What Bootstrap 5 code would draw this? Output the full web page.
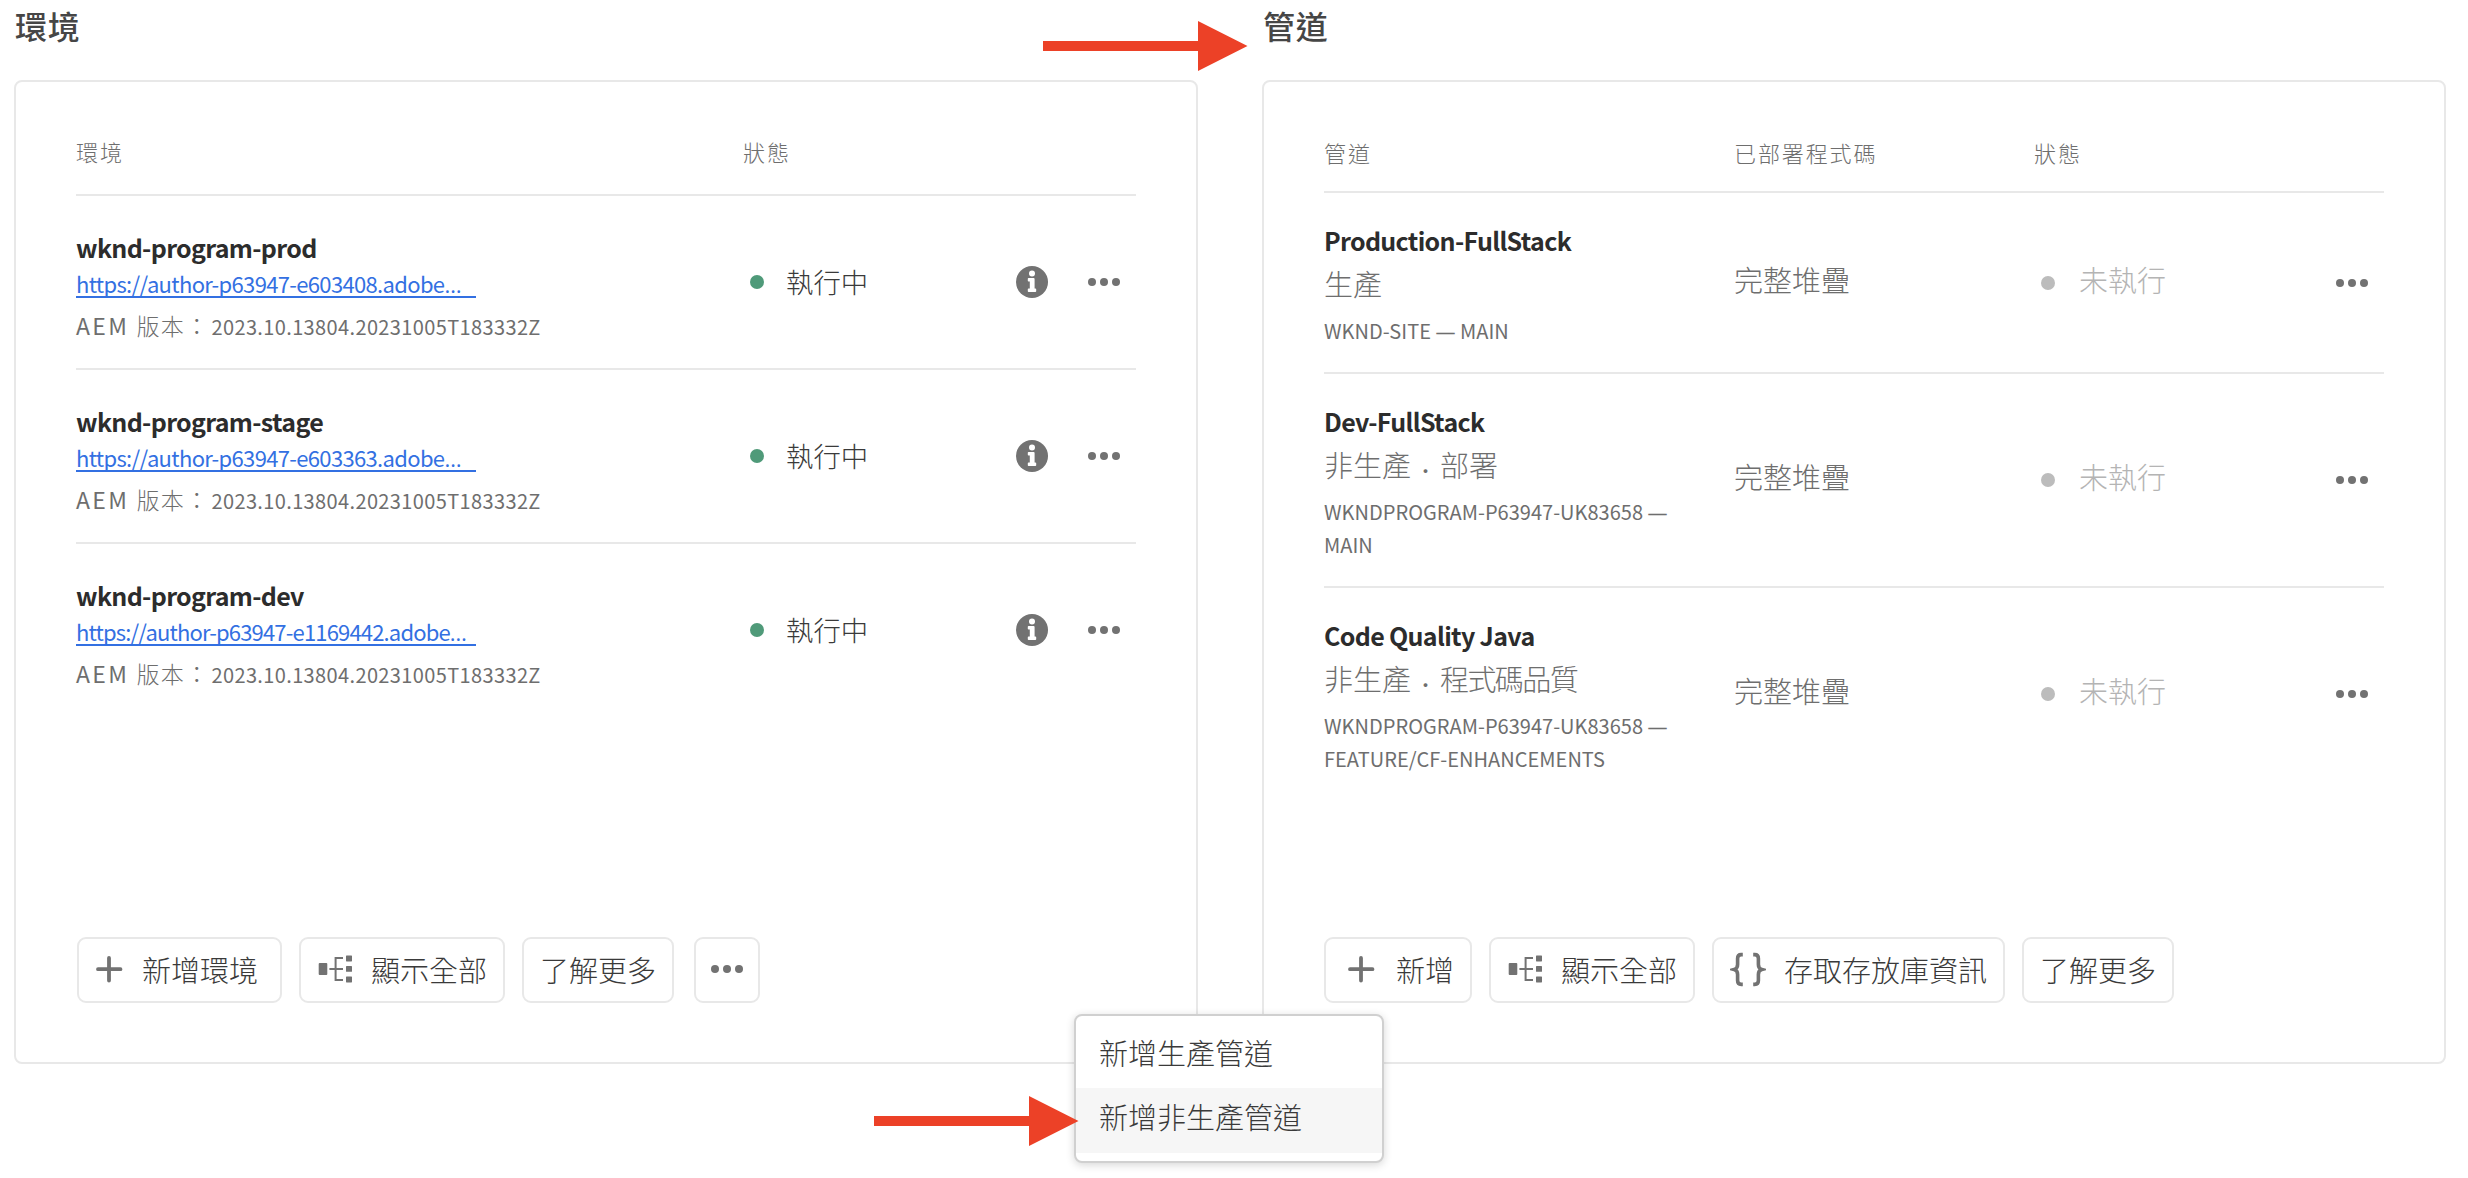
<!DOCTYPE html>
<html lang="zh-Hant">
<head>
<meta charset="utf-8">
<meta name="viewport" content="width=device-width, initial-scale=1">
<title>環境與管道</title>
<link href="https://cdn.jsdelivr.net/npm/bootstrap@5.3.0/dist/css/bootstrap.min.css" rel="stylesheet">
<style>
body{font-family:"Noto Sans CJK TC",sans-serif;background:#fff;color:#6e6e6e;overflow:hidden}
.board{padding:0 22px 0 14px;gap:64px}
.panel{flex:0 0 1184px}
.panel-title{font-size:32px;font-weight:500;letter-spacing:.8px;line-height:50px;height:80px;margin:0;padding-left:1px;color:#464646}
.panel-card{height:984px;border:2px solid #e8e8e8;border-radius:8px;padding:0 60px 59px}
.head-row{border-bottom:2px solid #e8e8e8;font-size:22px;font-weight:300;letter-spacing:1.9px;line-height:32px}
.env .head-row{height:114px;padding-top:53px}
.pipe .head-row{height:111px;padding-top:54px}
.item{border-bottom:2px solid #e8e8e8}
.item:last-child{border-bottom:0}
.env .item{height:174px;padding-top:35px}
.pipe .item{padding:31px 0 25px}
.col-env{flex:0 0 667px}
.col-pipe{flex:0 0 410px}
.col-code{flex:0 0 300px}
.item-name{font-size:25px;font-weight:700;letter-spacing:-.67px;line-height:32px;margin:0;color:#2c2c2c}
.item-link{display:block;width:400px;height:34px;margin:1px 0 8px;border-bottom:2px solid #3370e2;font-size:22px;line-height:39px;letter-spacing:-.66px;color:#3370e2;text-decoration:none;white-space:nowrap}
.item-link.tight{letter-spacing:-.83px}
.latin{font-family:"Open Sans",sans-serif;line-height:0}
.item-ver{line-height:39px;font-size:23px;font-weight:300;letter-spacing:1.3px;white-space:nowrap}
.item-ver b{font-weight:400;letter-spacing:2.3px}
.item-ver i{font-style:normal;font-weight:400;font-size:20px;letter-spacing:.37px;margin-left:2px}
.item-kind{margin-top:5px;line-height:44px;font-size:29px;font-weight:300}
.item-kind .sep{vertical-align:-6px;line-height:0}
.item-kind .snug{letter-spacing:-1.6px}
.item-branch{margin-top:9px;width:380px;line-height:33px;font-size:20px;letter-spacing:.02px}
.env .stat{margin-top:-35px;height:172px;padding-left:7px;font-size:27.4px;font-weight:300;color:#3a3a3a}
.pipe .stat{margin-top:-6px;padding-left:7px;font-size:29px;font-weight:300;color:#b4b4b4}
.pipe .lift{padding-bottom:6px;font-size:29px;font-weight:300}
.pipe .col-code{margin-top:-6px}
.dot{width:14px;height:14px;border-radius:50%;flex:none}
.dot-on{background:#4f9a79;margin-right:22px}
.dot-off{background:#bcbcbc;margin-right:24px}
.acts{margin-left:auto;padding-right:16px;gap:40px}
.env .acts{margin-top:-35px;height:172px}
.pipe .acts{margin-top:-6px}
svg{display:block;flex:none}
.tools{margin-top:auto;gap:17px}
.env .tools{padding-left:1px}
.tool{height:66px;padding:0 16px 3px;border:2px solid #e8e8e8;border-radius:9px;font-size:29px;font-weight:300;line-height:58px;color:#3a3a3a;display:flex;align-items:center;background:#fff}
.tool svg{margin:1px 18px 0 0}
.plus-l svg{margin-right:17px}.plus-l{padding-right:22px}
.plus-r svg{margin:1px 19px 0 5px}
.tool.only{width:66px;padding:0 0 2px;justify-content:center;margin-left:3px}
.tool.only svg{margin:0}
.pop{position:absolute;left:1074px;top:1014px;width:310px;height:149px;border:2px solid #d0d0d0;border-radius:8px;background:#fff;box-shadow:0 2px 8px rgba(0,0,0,.16);padding:8px 0;margin:0;font-size:29px;font-weight:300;color:#3a3a3a}
.pop li{height:64px;line-height:57px;padding-left:23px;list-style:none}
.pop li+li{background:#f6f6f6;height:65px}
.arrow{position:absolute}
.arrow-top{left:1043px;top:21px}
.arrow-menu{left:874px;top:1096px}
</style>
</head>
<body>
<svg width="0" height="0" class="position-absolute">
<defs>
<symbol id="more" viewBox="0 0 32 8"><circle cx="4" cy="4" r="4"/><circle cx="16" cy="4" r="4"/><circle cx="28" cy="4" r="4"/></symbol>
<symbol id="info" viewBox="0 0 32 32"><circle cx="16" cy="16" r="16"/><circle cx="16" cy="7.400" r="3" fill="#fff"/><path d="M12.6 12h5a1 1 0 0 1 1 1v9.400h.8a.8.8 0 0 1 .8.8v2a.8.8 0 0 1-.8.8h-6.800a.8.8 0 0 1-.8-.8v-2a.8.8 0 0 1 .8-.8h1.200v-6.800h-1.200a.8.8 0 0 1-.8-.8v-2a.8.8 0 0 1 .8-.8z" fill="#fff"/></symbol>
<symbol id="plus" viewBox="0 0 30 30"><path d="M14 4v22.500M3 15.200h22.500" fill="none" stroke="#727272" stroke-width="3.800" stroke-linecap="round"/></symbol>
<symbol id="tree" viewBox="0 0 36 36"><rect x="1.700" y="12" width="8.600" height="12" rx="1"/><rect x="29" y="4.400" width="6" height="6" rx=".6"/><rect x="29" y="15" width="6" height="5.800" rx=".6"/><rect x="29" y="25.400" width="6" height="6" rx=".6"/><path d="M12.400 18H26M26 7h-7.400v22H26" fill="none" stroke="#727272" stroke-width="2"/></symbol>
<symbol id="braces" viewBox="0 0 36 36"><path d="M12.800 3.600h-1.600q-3.600 0-3.600 3.800v6.200q0 4-3.400 4.900 3.400.9 3.400 4.900v6.200q0 3.800 3.600 3.800h1.600M23.200 3.600h1.600q3.600 0 3.600 3.800v6.200q0 4 3.400 4.900-3.400.9-3.400 4.900v6.200q0 3.800-3.600 3.800h-1.600" fill="none" stroke="#727272" stroke-width="3.600"/></symbol>
</defs>
</svg>

<main class="board d-flex">
<section class="panel env">
<h2 class="panel-title">環境</h2>
<div class="panel-card d-flex flex-column">
<div class="head-row d-flex"><div class="col-env">環境</div><div>狀態</div></div>
<div>
<div class="item d-flex">
<div class="col-env"><h3 class="item-name">wknd-program-prod</h3><a class="item-link" href="#">https://author-p63947-e603408.adobe<span class="latin">…</span></a><div class="item-ver"><b>AEM </b>版本：<i>2023.10.13804.20231005T183332Z</i></div></div>
<div class="stat d-flex align-items-center"><span class="dot dot-on"></span>執行中</div>
<div class="acts d-flex align-items-center"><svg width="32" height="32" fill="#727272"><use href="#info"/></svg><svg width="32" height="8" fill="#727272"><use href="#more"/></svg></div>
</div>
<div class="item d-flex">
<div class="col-env"><h3 class="item-name">wknd-program-stage</h3><a class="item-link" href="#">https://author-p63947-e603363.adobe<span class="latin">…</span></a><div class="item-ver"><b>AEM </b>版本：<i>2023.10.13804.20231005T183332Z</i></div></div>
<div class="stat d-flex align-items-center"><span class="dot dot-on"></span>執行中</div>
<div class="acts d-flex align-items-center"><svg width="32" height="32" fill="#727272"><use href="#info"/></svg><svg width="32" height="8" fill="#727272"><use href="#more"/></svg></div>
</div>
<div class="item d-flex">
<div class="col-env"><h3 class="item-name">wknd-program-dev</h3><a class="item-link tight" href="#">https://author-p63947-e1169442.adobe<span class="latin">…</span></a><div class="item-ver"><b>AEM </b>版本：<i>2023.10.13804.20231005T183332Z</i></div></div>
<div class="stat d-flex align-items-center"><span class="dot dot-on"></span>執行中</div>
<div class="acts d-flex align-items-center"><svg width="32" height="32" fill="#727272"><use href="#info"/></svg><svg width="32" height="8" fill="#727272"><use href="#more"/></svg></div>
</div>
</div>
<div class="tools d-flex">
<button class="btn tool plus-l"><svg width="30" height="30"><use href="#plus"/></svg>新增環境</button>
<button class="btn tool"><svg width="36" height="36" fill="#727272"><use href="#tree"/></svg>顯示全部</button>
<button class="btn tool">了解更多</button>
<button class="btn tool only"><svg width="32" height="8" fill="#727272"><use href="#more"/></svg></button>
</div>
</div>
</section>

<section class="panel pipe">
<h2 class="panel-title">管道</h2>
<div class="panel-card d-flex flex-column">
<div class="head-row d-flex"><div class="col-pipe">管道</div><div class="col-code mt-0">已部署程式碼</div><div>狀態</div></div>
<div>
<div class="item d-flex">
<div class="col-pipe"><h3 class="item-name">Production-FullStack</h3><div class="item-kind">生產</div><div class="item-branch">WKND-SITE <span class="latin">—</span> MAIN</div></div>
<div class="col-code lift d-flex align-items-center">完整堆疊</div>
<div class="stat d-flex align-items-center"><span class="dot dot-off"></span><span class="lift">未執行</span></div>
<div class="acts d-flex align-items-center"><svg width="32" height="8" fill="#727272"><use href="#more"/></svg></div>
</div>
<div class="item d-flex">
<div class="col-pipe"><h3 class="item-name">Dev-FullStack</h3><div class="item-kind">非生產<span class="sep">．</span>部署</div><div class="item-branch">WKNDPROGRAM-P63947-UK83658 <span class="latin">—</span> MAIN</div></div>
<div class="col-code lift d-flex align-items-center">完整堆疊</div>
<div class="stat d-flex align-items-center"><span class="dot dot-off"></span><span class="lift">未執行</span></div>
<div class="acts d-flex align-items-center"><svg width="32" height="8" fill="#727272"><use href="#more"/></svg></div>
</div>
<div class="item d-flex">
<div class="col-pipe"><h3 class="item-name">Code Quality Java</h3><div class="item-kind">非生產<span class="sep">．</span><span class="snug">程式碼品質</span></div><div class="item-branch">WKNDPROGRAM-P63947-UK83658 <span class="latin">—</span> FEATURE/CF-ENHANCEMENTS</div></div>
<div class="col-code lift d-flex align-items-center">完整堆疊</div>
<div class="stat d-flex align-items-center"><span class="dot dot-off"></span><span class="lift">未執行</span></div>
<div class="acts d-flex align-items-center"><svg width="32" height="8" fill="#727272"><use href="#more"/></svg></div>
</div>
</div>
<div class="tools d-flex">
<button class="btn tool plus-r"><svg width="30" height="30"><use href="#plus"/></svg>新增</button>
<button class="btn tool"><svg width="36" height="36" fill="#727272"><use href="#tree"/></svg>顯示全部</button>
<button class="btn tool"><svg width="36" height="36"><use href="#braces"/></svg>存取存放庫資訊</button>
<button class="btn tool">了解更多</button>
</div>
</div>
</section>
</main>

<ul class="pop"><li>新增生產管道</li><li>新增非生產管道</li></ul>
<svg class="arrow arrow-top" width="205" height="50"><path d="M0 20h155V0l49.500 25L155 50V30H0z" fill="#ec4127"/></svg>
<svg class="arrow arrow-menu" width="205" height="50"><path d="M0 20h155V0l49.500 25L155 50V30H0z" fill="#ec4127"/></svg>
<script src="https://cdn.jsdelivr.net/npm/bootstrap@5.3.0/dist/js/bootstrap.bundle.min.js"></script>
</body>
</html>
